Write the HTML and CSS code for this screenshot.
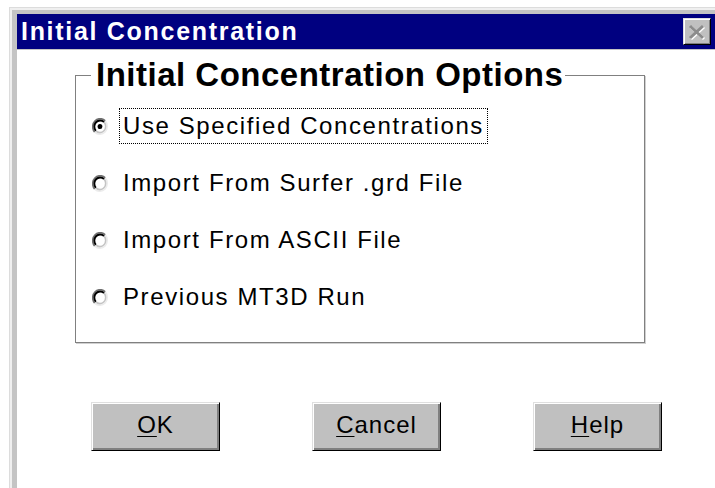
FILE: index.html
```html
<!DOCTYPE html>
<html lang="en">
<head>
<meta charset="utf-8">
<title>Initial Concentration</title>
<link rel="stylesheet" href="styles.css">
</head>
<body>
<div class="window">
  <div class="titlebar">
    <span class="title">Initial Concentration</span>
    <button class="close" type="button" aria-label="Close">
      <svg width="20" height="18" viewBox="0 0 20 18" aria-hidden="true">
        <path d="M3 3 L16 15 M16 3 L3 15" stroke="#ffffff" stroke-width="3" transform="translate(1 1)"/>
        <path d="M3 3 L16 15 M16 3 L3 15" stroke="#8c8c8c" stroke-width="3"/>
      </svg>
    </button>
  </div>
  <div class="client">
    <fieldset class="group">
      <legend class="group-title">Initial Concentration Options</legend>
      <div class="options">
        <div class="option">
          <svg class="radio" width="16" height="17" viewBox="0 0 16 16" preserveAspectRatio="none" aria-hidden="true">
            <circle cx="8" cy="8" r="6" fill="#ffffff"/>
            <path d="M2.7 13.3 A7.5 7.5 0 0 1 13.3 2.7" stroke="#6e6e6e" stroke-width="1.6" fill="none"/>
            <path d="M3.9 12.1 A5.8 5.8 0 0 1 12.1 3.9" stroke="#000000" stroke-width="1.9" fill="none"/>
            <path d="M13.3 2.7 A7.5 7.5 0 0 1 2.7 13.3" stroke="#ececec" stroke-width="1.4" fill="none"/>
            <path d="M12.1 3.9 A5.8 5.8 0 0 1 3.9 12.1" stroke="#c4c4c4" stroke-width="1.6" fill="none"/>
            <circle cx="8" cy="8" r="2.4" fill="#000000"/>
          </svg>
          <span class="label focused">Use Specified Concentrations</span>
        </div>
        <div class="option">
          <svg class="radio" width="16" height="17" viewBox="0 0 16 16" preserveAspectRatio="none" aria-hidden="true">
            <circle cx="8" cy="8" r="6" fill="#ffffff"/>
            <path d="M2.7 13.3 A7.5 7.5 0 0 1 13.3 2.7" stroke="#6e6e6e" stroke-width="1.6" fill="none"/>
            <path d="M3.9 12.1 A5.8 5.8 0 0 1 12.1 3.9" stroke="#000000" stroke-width="1.9" fill="none"/>
            <path d="M13.3 2.7 A7.5 7.5 0 0 1 2.7 13.3" stroke="#ececec" stroke-width="1.4" fill="none"/>
            <path d="M12.1 3.9 A5.8 5.8 0 0 1 3.9 12.1" stroke="#c4c4c4" stroke-width="1.6" fill="none"/>
          </svg>
          <span class="label">Import From Surfer .grd File</span>
        </div>
        <div class="option">
          <svg class="radio" width="16" height="17" viewBox="0 0 16 16" preserveAspectRatio="none" aria-hidden="true">
            <circle cx="8" cy="8" r="6" fill="#ffffff"/>
            <path d="M2.7 13.3 A7.5 7.5 0 0 1 13.3 2.7" stroke="#6e6e6e" stroke-width="1.6" fill="none"/>
            <path d="M3.9 12.1 A5.8 5.8 0 0 1 12.1 3.9" stroke="#000000" stroke-width="1.9" fill="none"/>
            <path d="M13.3 2.7 A7.5 7.5 0 0 1 2.7 13.3" stroke="#ececec" stroke-width="1.4" fill="none"/>
            <path d="M12.1 3.9 A5.8 5.8 0 0 1 3.9 12.1" stroke="#c4c4c4" stroke-width="1.6" fill="none"/>
          </svg>
          <span class="label">Import From ASCII File</span>
        </div>
        <div class="option">
          <svg class="radio" width="16" height="17" viewBox="0 0 16 16" preserveAspectRatio="none" aria-hidden="true">
            <circle cx="8" cy="8" r="6" fill="#ffffff"/>
            <path d="M2.7 13.3 A7.5 7.5 0 0 1 13.3 2.7" stroke="#6e6e6e" stroke-width="1.6" fill="none"/>
            <path d="M3.9 12.1 A5.8 5.8 0 0 1 12.1 3.9" stroke="#000000" stroke-width="1.9" fill="none"/>
            <path d="M13.3 2.7 A7.5 7.5 0 0 1 2.7 13.3" stroke="#ececec" stroke-width="1.4" fill="none"/>
            <path d="M12.1 3.9 A5.8 5.8 0 0 1 3.9 12.1" stroke="#c4c4c4" stroke-width="1.6" fill="none"/>
          </svg>
          <span class="label">Previous MT3D Run</span>
        </div>
      </div>
    </fieldset>
    <div class="buttons">
      <button class="btn" type="button"><u>O</u>K</button>
      <button class="btn" type="button"><u>C</u>ancel</button>
      <button class="btn" type="button"><u>H</u>elp</button>
    </div>
  </div>
</div>
</body>
</html>
```
FILE: styles.css
```css
html, body {
  margin: 0;
  padding: 0;
  background: #ffffff;
  overflow: hidden;
}

body {
  width: 715px;
  height: 488px;
  font-family: "Liberation Sans", Arial, sans-serif;
}

/* dialog frame: light outer lines, grey body */
.window {
  margin: 7px 0 0 9px;
  width: 698px;
  height: 478px;
  padding: 7px 8px 3px 8px;
  background: #c4c4c4;
  box-shadow: inset 1px 1px 0 #dcdcdc, inset 3px 3px 0 #efefef;
  display: flex;
  flex-direction: column;
}

.titlebar {
  height: 35px;
  flex: none;
  background: #000080;
  display: flex;
  align-items: center;
  justify-content: space-between;
  padding: 0 4px 0 4px;
  margin-bottom: 1px;
}

.title {
  color: #ffffff;
  font-weight: bold;
  font-size: 25px;
  letter-spacing: 1.7px;
  white-space: nowrap;
}

.close {
  width: 28px;
  height: 27px;
  padding: 0;
  margin: 0;
  background: #c0c0c0;
  border: 1px solid;
  border-color: #dfdfdf #000000 #000000 #dfdfdf;
  box-shadow: inset 1px 1px 0 #ffffff, inset -1px -1px 0 #808080;
  display: flex;
  align-items: center;
  justify-content: center;
}

.close svg {
  display: block;
}

.client {
  flex: 1;
  background: #ffffff;
  padding: 7px 0 0 58px;
}

.group {
  box-sizing: border-box;
  width: 570px;
  margin: 0;
  padding: 0 0 27px 0;
  border: 1px solid #808080;
  box-shadow: 1px 1px 0 #d0d0d0;
  min-width: 0;
}

.group-title {
  margin-left: 15px;
  padding: 0 2px 0 5px;
  font-size: 33px;
  line-height: 36px;
  letter-spacing: 0.5px;
  font-weight: bold;
  color: #000000;
}

.options {
  padding-top: 15px;
  display: flex;
  flex-direction: column;
  gap: 21px;
}

.option {
  height: 36px;
  display: flex;
  align-items: center;
  padding-left: 16px;
}

.radio {
  display: block;
  width: 16px;
  height: 17px;
  flex: none;
}

.label {
  margin-left: 11px;
  padding: 0 3px;
  border: 1px dotted transparent;
  line-height: 34px;
  font-size: 24px;
  letter-spacing: 1.6px;
  color: #000000;
  white-space: nowrap;
}

.label.focused {
  border-color: #000000;
}

.buttons {
  display: flex;
  gap: 92px;
  padding: 59px 0 0 16px;
}

.btn {
  width: 129px;
  height: 49px;
  margin: 0;
  padding: 0 0 3px 0;
  background: #c0c0c0;
  border: 1px solid;
  border-color: #dfdfdf #000000 #000000 #dfdfdf;
  box-shadow: inset 1px 1px 0 #ffffff, inset -2px -2px 0 #808080;
  font-family: "Liberation Sans", Arial, sans-serif;
  font-size: 24px;
  letter-spacing: 1px;
  color: #000000;
}

.btn u {
  text-decoration-thickness: 1px;
  text-underline-offset: 3px;
}
```
